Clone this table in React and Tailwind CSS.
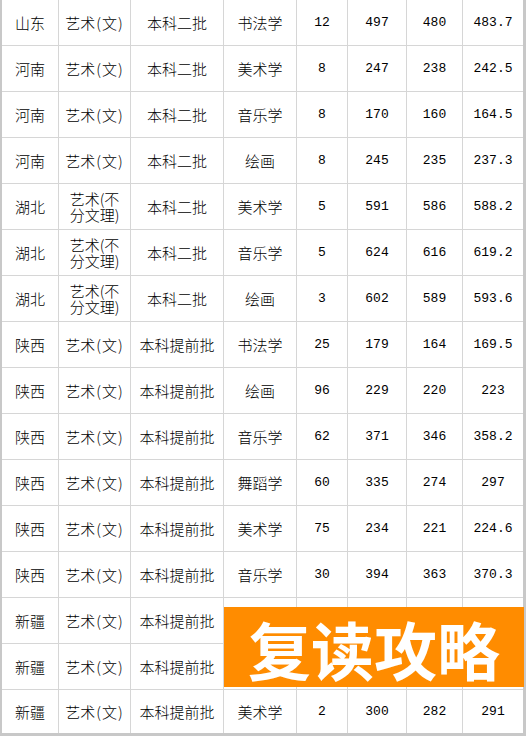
const rows = [
  ['山东', '艺术(文)', '本科二批', '书法学', '12', '497', '480', '483.7'],
  ['河南', '艺术(文)', '本科二批', '美术学', '8', '247', '238', '242.5'],
  ['河南', '艺术(文)', '本科二批', '音乐学', '8', '170', '160', '164.5'],
  ['河南', '艺术(文)', '本科二批', '绘画', '8', '245', '235', '237.3'],
  ['湖北', 'split', '本科二批', '美术学', '5', '591', '586', '588.2'],
  ['湖北', 'split', '本科二批', '音乐学', '5', '624', '616', '619.2'],
  ['湖北', 'split', '本科二批', '绘画', '3', '602', '589', '593.6'],
  ['陕西', '艺术(文)', '本科提前批', '书法学', '25', '179', '164', '169.5'],
  ['陕西', '艺术(文)', '本科提前批', '绘画', '96', '229', '220', '223'],
  ['陕西', '艺术(文)', '本科提前批', '音乐学', '62', '371', '346', '358.2'],
  ['陕西', '艺术(文)', '本科提前批', '舞蹈学', '60', '335', '274', '297'],
  ['陕西', '艺术(文)', '本科提前批', '美术学', '75', '234', '221', '224.6'],
  ['陕西', '艺术(文)', '本科提前批', '音乐学', '30', '394', '363', '370.3'],
  ['新疆', '艺术(文)', '本科提前批', '', '', '', '', ''],
  ['新疆', '艺术(文)', '本科提前批', '', '', '', '', ''],
  ['新疆', '艺术(文)', '本科提前批', '美术学', '2', '300', '282', '291'],
];

const widths = ['w-[57px]', 'w-[72px]', 'w-[93px]', 'w-[73px]', 'w-[51px]', 'w-[59px]', 'w-[56px]', 'w-[60px]'];

const cjk = 'font-["Noto_Sans_CJK_SC",sans-serif] font-light text-[15px]';
const num = 'font-["Liberation_Mono",monospace] text-[13px]';

function Type({ text }) {
  if (text === 'split') {
    return (
      <span className="block leading-[16px]">
        艺术(不
        <br />
        分文理)
      </span>
    );
  }
  if (text.startsWith('艺术(')) {
    // wider half-width parens like the original
    return (
      <span>
        艺术<span className="mx-px">(</span>文<span className="mx-px">)</span>
      </span>
    );
  }
  return text;
}

export default function App() {
  return (
    <div className="relative w-[526px] h-[736px] overflow-hidden bg-white text-black">
      <div className="border-l-2 border-r-[3px] border-[#c8c8c8]">
        {rows.map((row, i) => (
          <div
            key={i}
            className={
              'flex h-[46px] ' +
              (i === rows.length - 1 ? 'border-b-[3px] border-[#c8c8c8]' : 'border-b border-[#d6d6d6]')
            }
          >
            {row.map((cell, j) => (
              <div
                key={j}
                className={
                  widths[j] +
                  ' flex items-center justify-center text-center pt-px ' +
                  (j < 7 ? 'border-r border-[#d6d6d6] ' : '') +
                  (j >= 4 ? num : cjk)
                }
              >
                {j === 1 ? <Type text={cell} /> : cell}
              </div>
            ))}
          </div>
        ))}
      </div>

      {/* watermark banner */}
      <div className="absolute left-[224px] top-[607px] w-[300px] h-[80px] bg-[#ff8c00] flex items-center justify-center">
        <span className='font-["Noto_Sans_CJK_SC",sans-serif] font-bold text-[63px] leading-none text-white'>
          复读攻略
        </span>
      </div>
    </div>
  );
}
